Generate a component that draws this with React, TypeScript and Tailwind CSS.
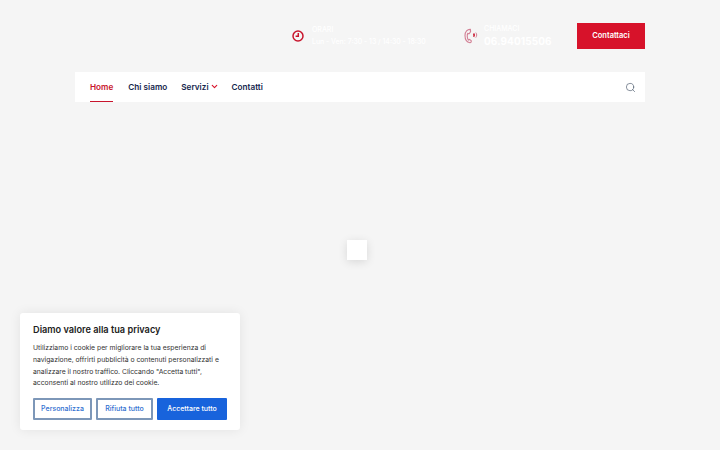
import { ChevronDown, Search } from "lucide-react";

const font = { fontFamily: "Inter, 'Noto Sans', sans-serif" };

const PhoneIcon = () => (
  <svg width="14" height="16" viewBox="0 0 14 16" fill="none" stroke="#d27f94" strokeWidth="1.1">
    <path d="M6.4 1.4C3.4 1.2 1 3.6 1 7.4c0 3.8 2.2 6.8 5 7.4.9-.1 1.3-1 1.4-1.9L5.6 11.4l-1.2.6C3.2 10.4 2.8 7 3.8 5.4l1.4.3 1.4-2.2z" />
    <path d="M9.6 5.4c.8 1 .8 2.4 0 3.4" stroke="#c8152d" strokeWidth="1.6" />
    <path d="M11.8 4.6c1.2 1.4 1.2 3.4 0 5" stroke="#d27f94" strokeWidth="1" />
  </svg>
);

const ClockIcon = () => (
  <svg width="12" height="12" viewBox="0 0 12 12" fill="none" stroke="#c8152d" strokeWidth="1.5">
    <circle cx="6" cy="6" r="5" />
    <path d="M6.3 3v3.3H3.6" />
  </svg>
);

export default function App() {
  return (
    <div style={font} className="relative h-[450px] w-[720px] overflow-hidden bg-[#f5f5f5]">
      <div className="mx-[75px] flex h-[72px] items-center justify-end pb-[1px]">
        <div className="flex items-center gap-[8px]">
          <ClockIcon />
          <div className="w-[140px] text-white">
            <div className="text-[7px] font-medium leading-[12px]">ORARI</div>
            <div className="text-[6.9px] font-medium leading-[12px]">Lun - Ven: 7:30 - 13 / 14:30 - 18:30</div>
          </div>
        </div>
        <div className="ml-[12px] flex items-center gap-[6px]">
          <PhoneIcon />
          <div className="w-[93px] text-white">
            <div className="text-[7px] font-medium leading-[11px]">CHIAMACI</div>
            <div className="text-[10px] font-bold leading-[14px] tracking-[0.1px]">06.94015506</div>
          </div>
        </div>
        <button className="h-[26px] w-[68px] bg-[#d7122a] pt-[1px] text-[7.5px] font-semibold text-white">Contattaci</button>
      </div>

      <nav className="mx-[75px] flex h-[30px] items-center justify-between bg-white pl-[15px] pr-[9px]">
        <div className="flex h-full items-center text-[8.2px] font-semibold text-[#14264d]">
          <a className="flex h-full items-center border-b-[1.5px] border-[#c8152d] pt-[1px] text-[#c8152d]">Home</a>
          <a className="ml-[15px]">Chi siamo</a>
          <a className="ml-[14px] flex items-center gap-[1px]">
            Servizi
            <ChevronDown size={9} strokeWidth={3} className="text-[#d7122a]" />
          </a>
          <a className="ml-[13px]">Contatti</a>
        </div>
        <Search size={11} strokeWidth={1.2} className="text-[#2a3a50]" />
      </nav>

      <div className="absolute left-[347px] top-[240px] h-[20px] w-[20px] bg-white shadow-[0_2px_10px_rgba(0,0,0,0.12)]" />

      <div className="absolute bottom-[20px] left-[20px] w-[220px] rounded-[3px] bg-white px-[13px] pb-[10px] pt-[11px] shadow-[0_0_12px_rgba(0,0,0,0.08)]">
        <h2 className="text-[9.2px] font-semibold leading-[12px] text-[#212121]">Diamo valore alla tua privacy</h2>
        <p className="mt-[6px] text-[6.8px] leading-[11.7px] text-[#333333]">
          Utilizziamo i cookie per migliorare la tua esperienza di navigazione, offrirti pubblicità o contenuti personalizzati e analizzare il nostro traffico. Cliccando "Accetta tutti", acconsenti al nostro utilizzo dei cookie.
        </p>
        <div className="mt-[9px] flex gap-[4px] text-[7px] font-medium">
          <button className="h-[22px] w-[59px] rounded-[1px] border-2 border-[#7d97b8] text-[#2f6fd0]">Personalizza</button>
          <button className="h-[22px] w-[57px] rounded-[1px] border-2 border-[#7d97b8] text-[#2f6fd0]">Rifiuta tutto</button>
          <button className="h-[22px] w-[70px] rounded-[1px] bg-[#1863dc] text-white">Accettare tutto</button>
        </div>
      </div>
    </div>
  );
}
